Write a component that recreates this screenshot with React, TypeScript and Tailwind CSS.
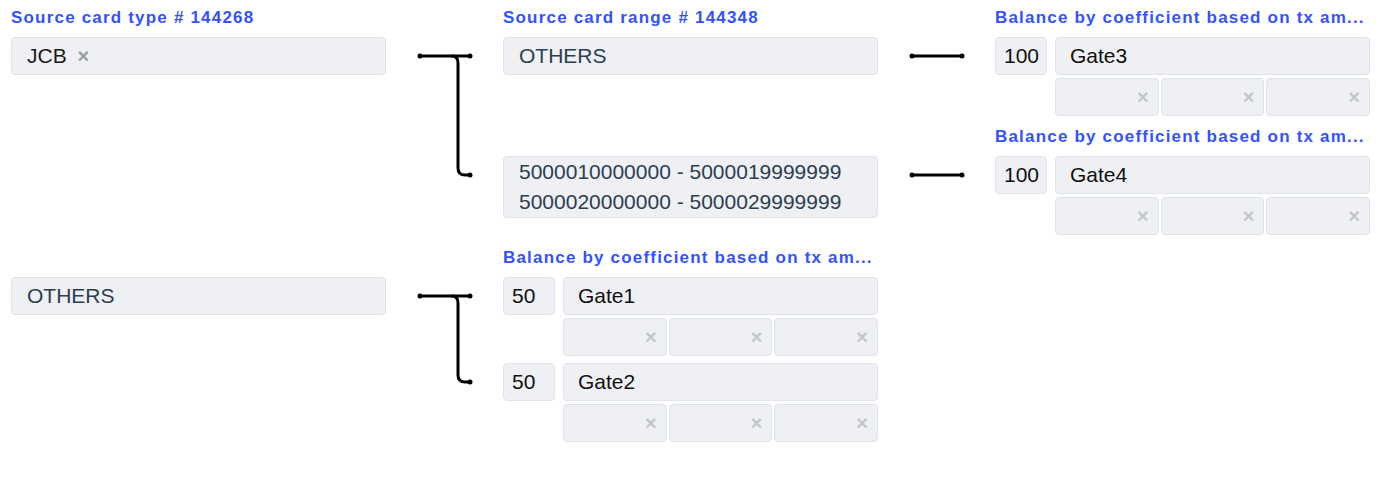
import React from 'react';

type Gate = { weight: number; name: string };

const box = 'rounded-[4px] border border-[#dfe3ea] bg-[#eef0f4]';

function Label({ text }: { text?: string }) {
  return (
    <div className="h-[20px] mb-[9px] text-[17px] leading-[20px] font-bold tracking-[0.07em] text-[#3352ff] whitespace-nowrap overflow-hidden">
      {text ?? '\u00a0'}
    </div>
  );
}

// Branching wire between two columns; ys[0] is the trunk, the rest curve down from it
function Connector({ ys, height }: { ys: number[]; height: number }) {
  const [y0, ...rest] = ys;
  return (
    <div className="w-[117px] shrink-0">
      <svg width="56" height={height} className="ml-[31px]" fill="none" stroke="#000" strokeWidth="3" strokeLinecap="round">
        <line x1="3" y1={y0} x2="53" y2={y0} />
        {rest.map((y) => (
          <path key={y} d={`M35 ${y0} Q41 ${y0} 41 ${y0 + 7} L41 ${y - 7} Q41 ${y} 48 ${y} L53 ${y}`} />
        ))}
        <circle cx="3" cy={y0} r="2.5" fill="#000" stroke="none" />
        <circle cx="53" cy={y0} r="2.5" fill="#000" stroke="none" />
        {rest.map((y) => (
          <circle key={y} cx="53" cy={y} r="2.5" fill="#000" stroke="none" />
        ))}
      </svg>
    </div>
  );
}

function Slot() {
  return (
    <div className={`${box} flex-1 h-[38px] flex items-center justify-end pr-[9px]`}>
      <span className="text-[20px] font-bold text-[#c4c6ca] leading-none">×</span>
    </div>
  );
}

function GateRow({ gate }: { gate: Gate }) {
  return (
    <div className="flex gap-2">
      <div className={`${box} w-[52px] h-[38px] shrink-0 flex items-center pl-[8px] text-[21px] text-[#111]`}>
        {gate.weight}
      </div>
      <div className="flex-1 flex flex-col gap-[3px]">
        <div className={`${box} h-[38px] flex items-center px-[14px] text-[21px] text-[#111]`}>{gate.name}</div>
        <div className="flex gap-[2px]">
          <Slot />
          <Slot />
          <Slot />
        </div>
      </div>
    </div>
  );
}

function GateGroup({ gates }: { gates: Gate[] }) {
  return (
    <div className="w-[375px] shrink-0">
      <Label text="Balance by coefficient based on tx am..." />
      <div className="flex flex-col gap-[7px]">
        {gates.map((g) => (
          <GateRow key={g.name} gate={g} />
        ))}
      </div>
    </div>
  );
}

function Field({ children, className = '' }: { children: React.ReactNode; className?: string }) {
  return <div className={`${box} px-[15px] text-[21px] ${className}`}>{children}</div>;
}

export default function App() {
  return (
    <div className="min-h-screen bg-white pt-2 pl-[11px] font-['Liberation_Sans',Arial,sans-serif]">
      {/* JCB source */}
      <div className="flex">
        <div className="w-[375px] shrink-0">
          <Label text="Source card type # 144268" />
          <Field className="text-[#1a1a1a] py-[6px] leading-[24px]">
            JCB <span className="ml-[5px] text-[20px] font-bold text-[#9b9b9b]">×</span>
          </Field>
        </div>
        <Connector ys={[48, 167]} height={175} />
        <div className="flex flex-col gap-[11px]">
          <div className="flex">
            <div className="w-[375px] shrink-0">
              <Label text="Source card range # 144348" />
              <Field className="text-[#2c3e50] py-[6px] leading-[24px]">OTHERS</Field>
            </div>
            <Connector ys={[48]} height={60} />
            <GateGroup gates={[{ weight: 100, name: 'Gate3' }]} />
          </div>
          <div className="flex">
            <div className="w-[375px] shrink-0">
              <Label />
              <Field className="text-[#2c3e50] leading-[30px]">
                <div>5000010000000 - 5000019999999</div>
                <div>5000020000000 - 5000029999999</div>
              </Field>
            </div>
            <Connector ys={[48]} height={60} />
            <GateGroup gates={[{ weight: 100, name: 'Gate4' }]} />
          </div>
        </div>
      </div>

      {/* fallback source */}
      <div className="flex mt-[13px]">
        <div className="w-[375px] shrink-0">
          <Label />
          <Field className="text-[#2c3e50] py-[6px] leading-[24px]">OTHERS</Field>
        </div>
        <Connector ys={[48, 134]} height={140} />
        <GateGroup
          gates={[
            { weight: 50, name: 'Gate1' },
            { weight: 50, name: 'Gate2' },
          ]}
        />
      </div>
    </div>
  );
}
